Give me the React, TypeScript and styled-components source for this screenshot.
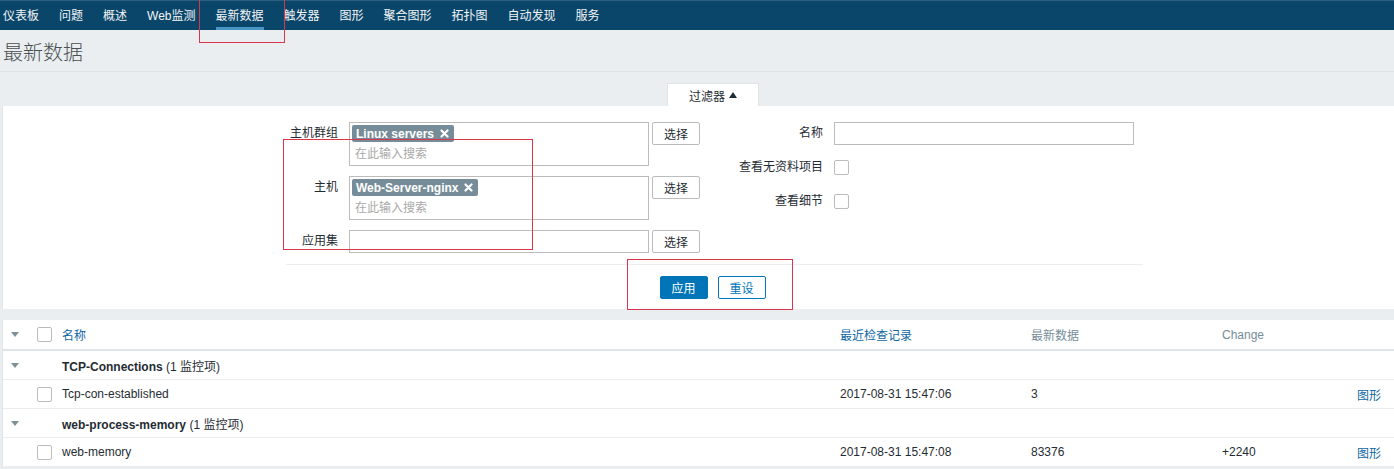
import React from "react";
import styled, { createGlobalStyle } from "styled-components";

const GlobalStyle = createGlobalStyle`
  html, body {
    margin: 0;
    padding: 0;
    background: #ebeef0;
    font-family: "Liberation Sans", Arial, "Noto Sans CJK SC", sans-serif;
    font-size: 12px;
    color: #1f2c33;
  }
  * { box-sizing: border-box; }
`;

const Page = styled.div`
  position: relative;
  width: 1394px;
  height: 469px;
  overflow: hidden;
`;

const TopNav = styled.nav`
  display: flex;
  gap: 20px;
  height: 30px;
  padding-left: 3px;
  background: #0a466a;
  border-top: 1px solid #2a5f80;
`;

const NavItem = styled.a<{ $active?: boolean }>`
  display: flex;
  align-items: center;
  height: 29px;
  padding-top: 1px;
  color: #f2f4f5;
  font-size: 12px;
  white-space: nowrap;
  border-bottom: 3px solid ${(p) => (p.$active ? "#4796c4" : "transparent")};
`;

const Header = styled.header`
  height: 42px;
  padding: 9px 0 0 3px;
  border-bottom: 1px solid #dde2e5;
`;

const Title = styled.h1`
  margin: 0;
  font-size: 20px;
  font-weight: 300;
  line-height: 26px;
  color: #4a4f52;
  font-family: "Noto Sans CJK SC", sans-serif;
`;

const TabBar = styled.div`
  display: flex;
  justify-content: center;
  width: 860px;
  margin-left: 283px;
  padding-top: 11px;
`;

const FilterTab = styled.div`
  width: 92px;
  height: 23px;
  display: flex;
  align-items: center;
  justify-content: center;
  gap: 4px;
  background: #fff;
  border: 1px solid #dfe4e7;
  border-bottom: none;
  font-size: 12px;
`;

const Caret = styled.span`
  width: 0;
  height: 0;
  border-left: 4px solid transparent;
  border-right: 4px solid transparent;
  border-bottom: 6px solid #1f2c33;
`;

const FilterPanel = styled.section`
  margin-left: 2px;
  height: 203px;
  background: #fff;
  border-left: 1px solid #dfe4e7;
  padding-top: 16px;
`;

const FormWrap = styled.div`
  width: 863px;
  margin-left: 277px;
`;

const Columns = styled.div`
  display: flex;
`;

const LeftCol = styled.div`
  width: 430px;
  display: flex;
  flex-direction: column;
  gap: 10px;
`;

const RightCol = styled.div`
  display: flex;
  flex-direction: column;
  gap: 11px;
`;

const FormRow = styled.div`
  display: flex;
  align-items: flex-start;
`;

const Label = styled.label<{ $width: number }>`
  width: ${(p) => p.$width}px;
  text-align: right;
  line-height: 23px;
  padding-right: 11px;
  white-space: nowrap;
`;

const MultiSelect = styled.div`
  width: 300px;
  height: 44px;
  border: 1px solid #bcbcbc;
  padding: 2px 2px 0 2px;
`;

const Tag = styled.span`
  display: inline-flex;
  align-items: center;
  gap: 6px;
  height: 17px;
  padding: 0 5px 0 4px;
  border-radius: 2px;
  background: #768d99;
  color: #fff;
  font-weight: bold;
  font-size: 12px;
`;

const Placeholder = styled.div`
  padding: 5px 0 0 3px;
  color: #a9a9a9;
  font-size: 12px;
  line-height: 15px;
`;

const TextInput = styled.div`
  width: 300px;
  height: 23px;
  border: 1px solid #bcbcbc;
  background: #fff;
`;

const SelectButton = styled.button`
  width: 48px;
  height: 23px;
  margin-left: 3px;
  background: #fff;
  border: 1px solid #bcbcbc;
  border-radius: 2px;
  color: #1f2c33;
  font-size: 12px;
  font-family: inherit;
  padding: 0;
`;

const CheckRow = styled.div`
  display: flex;
  align-items: center;
  height: 23px;
`;

const Checkbox = styled.span`
  display: inline-block;
  width: 15px;
  height: 15px;
  border: 1px solid #bcbcbc;
  border-radius: 2px;
  background: #fff;
`;

const Divider = styled.div`
  height: 1px;
  margin: 11px 0 0 6px;
  background: #ebeef0;
`;

const Actions = styled.div`
  display: flex;
  justify-content: center;
  gap: 10px;
  padding: 11px 0 0 2px;
`;

const ActionButton = styled.button<{ $primary?: boolean }>`
  width: 48px;
  height: 23px;
  border-radius: 2px;
  font-size: 12px;
  font-family: inherit;
  padding: 0;
  border: 1px solid #0275b8;
  background: ${(p) => (p.$primary ? "#0275b8" : "#fff")};
  color: ${(p) => (p.$primary ? "#fff" : "#0275b8")};
`;

const Table = styled.div`
  margin: 11px 0 0 2px;
  background: #fff;
  border-left: 1px solid #dfe4e7;
`;

const Row = styled.div<{ $head?: boolean }>`
  display: grid;
  grid-template-columns: 27px 27px 778px 191px 191px 1fr 60px;
  align-items: center;
  height: ${(p) => (p.$head ? 31 : 29)}px;
  border-bottom: ${(p) => (p.$head ? "2px solid #dfe4e7" : "1px solid #ebeef0")};
`;

const Cell = styled.div<{ $color?: string; $right?: boolean }>`
  padding: 0 ${(p) => (p.$right ? "13px" : "5px")} 0 5px;
  color: ${(p) => p.$color || "#1f2c33"};
  text-align: ${(p) => (p.$right ? "right" : "left")};
  white-space: nowrap;
`;

const ToggleCell = styled.div`
  display: flex;
  padding-left: 8px;
`;

const Arrow = styled.span`
  width: 0;
  height: 0;
  border-left: 4px solid transparent;
  border-right: 4px solid transparent;
  border-top: 5px solid #7f8f98;
`;

const CheckCell = styled.div`
  display: flex;
  padding-left: 7px;
`;

const GroupName = styled.div`
  grid-column: 3 / -1;
  padding-left: 5px;
`;

const Strong = styled.b`
  font-weight: bold;
`;

const Annotation = styled.div<{ $x: number; $y: number; $w: number; $h: number }>`
  position: absolute;
  left: ${(p) => p.$x}px;
  top: ${(p) => p.$y}px;
  width: ${(p) => p.$w}px;
  height: ${(p) => p.$h}px;
  border: 1px solid #d7374a;
  pointer-events: none;
`;

const RemoveIcon = () => (
  <svg width="9" height="9" viewBox="0 0 9 9">
    <path d="M1.5 1.5 L7.5 7.5 M7.5 1.5 L1.5 7.5" stroke="#fff" strokeWidth="2.2" strokeLinecap="round" />
  </svg>
);

const navItems = ["仪表板", "问题", "概述", "Web监测", "最新数据", "触发器", "图形", "聚合图形", "拓扑图", "自动发现", "服务"];

const groups = [
  { name: "TCP-Connections", item: "Tcp-con-established", time: "2017-08-31 15:47:06", value: "3", change: "" },
  { name: "web-process-memory", item: "web-memory", time: "2017-08-31 15:47:08", value: "83376", change: "+2240" },
];

export default function App() {
  return (
    <Page>
      <GlobalStyle />
      <TopNav>
        {navItems.map((n) => (
          <NavItem key={n} $active={n === "最新数据"}>{n}</NavItem>
        ))}
      </TopNav>
      <Header>
        <Title>最新数据</Title>
      </Header>
      <TabBar>
        <FilterTab>过滤器 <Caret /></FilterTab>
      </TabBar>
      <FilterPanel>
        <FormWrap>
          <Columns>
            <LeftCol>
              <FormRow>
                <Label $width={69}>主机群组</Label>
                <MultiSelect>
                  <Tag>Linux servers <RemoveIcon /></Tag>
                  <Placeholder>在此输入搜索</Placeholder>
                </MultiSelect>
                <SelectButton>选择</SelectButton>
              </FormRow>
              <FormRow>
                <Label $width={69}>主机</Label>
                <MultiSelect>
                  <Tag>Web-Server-nginx <RemoveIcon /></Tag>
                  <Placeholder>在此输入搜索</Placeholder>
                </MultiSelect>
                <SelectButton>选择</SelectButton>
              </FormRow>
              <FormRow>
                <Label $width={69}>应用集</Label>
                <TextInput />
                <SelectButton>选择</SelectButton>
              </FormRow>
            </LeftCol>
            <RightCol>
              <FormRow>
                <Label $width={124}>名称</Label>
                <TextInput />
              </FormRow>
              <CheckRow>
                <Label $width={124}>查看无资料项目</Label>
                <Checkbox />
              </CheckRow>
              <CheckRow>
                <Label $width={124}>查看细节</Label>
                <Checkbox />
              </CheckRow>
            </RightCol>
          </Columns>
          <Divider />
          <Actions>
            <ActionButton $primary>应用</ActionButton>
            <ActionButton>重设</ActionButton>
          </Actions>
        </FormWrap>
      </FilterPanel>
      <Table>
        <Row $head>
          <ToggleCell><Arrow /></ToggleCell>
          <CheckCell><Checkbox /></CheckCell>
          <Cell $color="#0f67a3">名称</Cell>
          <Cell $color="#0f67a3">最近检查记录</Cell>
          <Cell $color="#768d99">最新数据</Cell>
          <Cell $color="#768d99">Change</Cell>
          <Cell />
        </Row>
        {groups.map((g) => (
          <React.Fragment key={g.name}>
            <Row>
              <ToggleCell><Arrow /></ToggleCell>
              <div />
              <GroupName><Strong>{g.name}</Strong> (1 监控项)</GroupName>
            </Row>
            <Row>
              <div />
              <CheckCell><Checkbox /></CheckCell>
              <Cell>{g.item}</Cell>
              <Cell>{g.time}</Cell>
              <Cell>{g.value}</Cell>
              <Cell>{g.change}</Cell>
              <Cell $right $color="#0f67a3">图形</Cell>
            </Row>
          </React.Fragment>
        ))}
      </Table>
      <Annotation $x={199} $y={-2} $w={86} $h={45} />
      <Annotation $x={283} $y={139} $w={250} $h={111} />
      <Annotation $x={627} $y={259} $w={166} $h={51} />
    </Page>
  );
}
